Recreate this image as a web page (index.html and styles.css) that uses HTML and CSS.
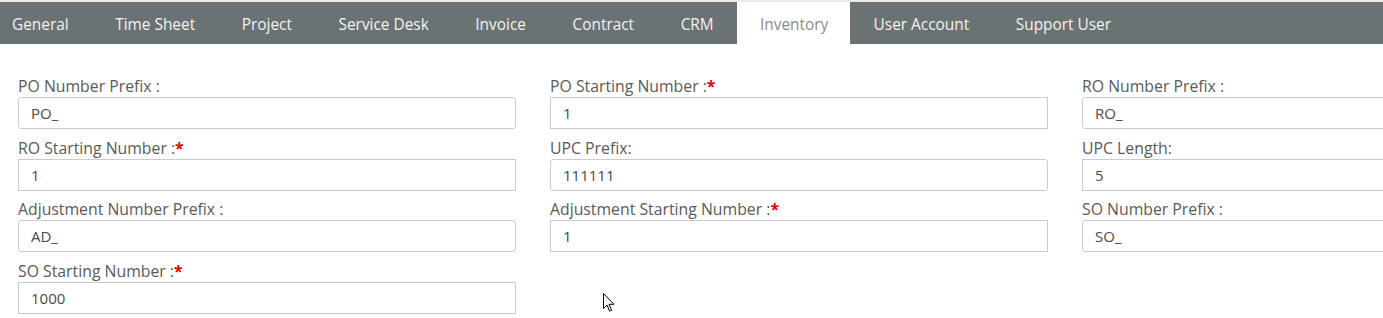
FILE: index.html
```html
<!DOCTYPE html>
<html lang="en">
<head>
  <meta charset="UTF-8">
  <title>Settings - Inventory</title>
  <link rel="stylesheet" href="styles.css">
</head>
<body>

<nav class="tabs">
  <a class="tab first">General</a>
  <a class="tab">Time Sheet</a>
  <a class="tab">Project</a>
  <a class="tab">Service Desk</a>
  <a class="tab">Invoice</a>
  <a class="tab">Contract</a>
  <a class="tab">CRM</a>
  <a class="tab active">Inventory</a>
  <a class="tab">User Account</a>
  <a class="tab">Support User</a>
</nav>

<form class="settings-grid">
  <div class="field">
    <label>PO Number Prefix :</label>
    <input type="text" class="rounded" value="PO_">
  </div>
  <div class="field">
    <label>PO Starting Number :<span class="req">*</span></label>
    <input type="text" value="1">
  </div>
  <div class="field">
    <label>RO Number Prefix :</label>
    <input type="text" class="rounded" value="RO_">
  </div>

  <div class="field">
    <label>RO Starting Number :<span class="req">*</span></label>
    <input type="text" value="1">
  </div>
  <div class="field">
    <label>UPC Prefix:</label>
    <input type="text" class="rounded" value="111111">
  </div>
  <div class="field">
    <label>UPC Length:</label>
    <input type="text" value="5">
  </div>

  <div class="field">
    <label>Adjustment Number Prefix :</label>
    <input type="text" class="rounded" value="AD_">
  </div>
  <div class="field">
    <label>Adjustment Starting Number :<span class="req">*</span></label>
    <input type="text" value="1">
  </div>
  <div class="field">
    <label>SO Number Prefix :</label>
    <input type="text" class="rounded" value="SO_">
  </div>

  <div class="field">
    <label>SO Starting Number :<span class="req">*</span></label>
    <input type="text" value="1000">
  </div>
</form>

<svg class="cursor" width="12" height="19" viewBox="0 0 12 19">
  <path d="M0.5 0.5 L0.5 15.5 L4 12 L6.5 18 L8.5 17.2 L6 11.3 L11 11.3 Z" fill="#fff" stroke="#000" stroke-width="1"/>
</svg>

</body>
</html>
```

FILE: styles.css
```css
body {
  margin: 0;
  font-family: "Open Sans", Arial, sans-serif;
  background: #fff;
  color: #555;
  overflow: hidden;
  position: relative;
  min-height: 318px;
}

.tabs {
  display: flex;
  border-top: 2px solid #e9e9e9;
  background: #6b7273;
  height: 42px;
  white-space: nowrap;
}
.tab {
  display: flex;
  align-items: center;
  padding: 2px 23.3px 0;
  color: #f2f2f2;
  font-size: 15.4px;
  cursor: pointer;
}
.tab.first {
  padding-left: 12px;
}
.tab.active {
  background: #fff;
  color: #8a8a8a;
  padding: 2px 22px 0 23px;
}

.settings-grid {
  display: grid;
  grid-template-columns: repeat(3, 498px);
  column-gap: 34px;
  row-gap: 7.7px;
  padding: 31px 0 0 18px;
  width: 1600px;
}
.field {
  display: flex;
  flex-direction: column;
}
.field label {
  font-size: 15.8px;
  line-height: 22px;
  height: 22px;
  color: #5a5a5a;
}
.req {
  color: #e00000;
  font-weight: bold;
}
.field input {
  height: 32px;
  box-sizing: border-box;
  border: 1px solid #cbcbcb;
  border-radius: 0;
  padding: 0 12px;
  font-family: "Open Sans", Arial, sans-serif;
  font-size: 15px;
  color: #4a4a4a;
  outline: none;
}
.field input.rounded {
  border-radius: 3px;
}

.cursor {
  position: absolute;
  left: 603px;
  top: 293px;
}
```
